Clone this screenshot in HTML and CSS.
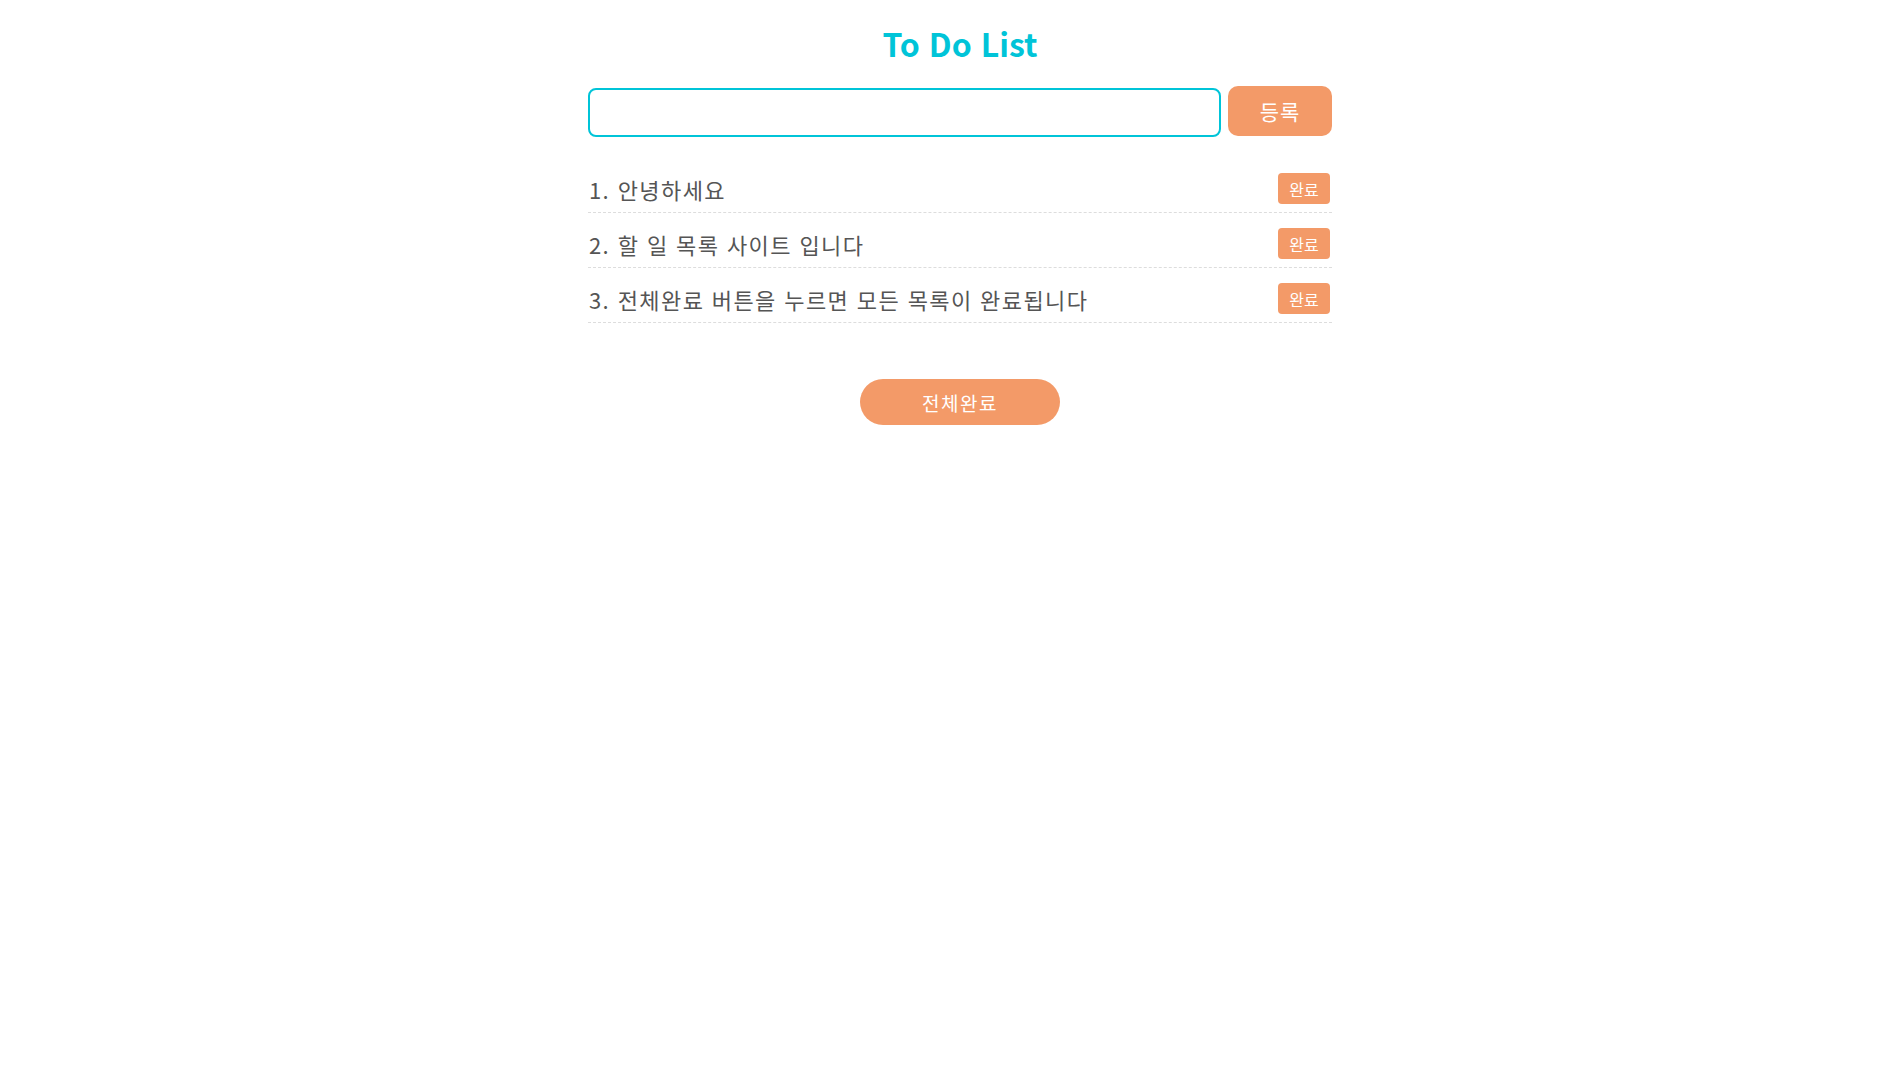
FILE: index.html
```html
<!DOCTYPE html>
<html lang="ko">
<head>
<meta charset="utf-8">
<title>To Do List</title>
<link rel="stylesheet" href="styles.css">
</head>
<body>
<div class="app">
  <h1 class="title">To Do List</h1>
  <form class="add-form">
    <input class="add-input" type="text">
    <button class="add-btn" type="button">등록</button>
  </form>
  <ul class="todo-list">
    <li class="todo-item"><span class="todo-text">1. 안녕하세요</span><button class="done-btn" type="button">완료</button></li>
    <li class="todo-item"><span class="todo-text">2. 할 일 목록 사이트 입니다</span><button class="done-btn" type="button">완료</button></li>
    <li class="todo-item"><span class="todo-text">3. 전체완료 버튼을 누르면 모든 목록이 완료됩니다</span><button class="done-btn" type="button">완료</button></li>
  </ul>
  <button class="all-btn" type="button">전체완료</button>
</div>
</body>
</html>
```
FILE: styles.css
```css
html, body {
  background: #ffffff;
}
body {
  margin: 0;
  padding: 0 0 0 20px;
  font-family: "Noto Sans CJK KR", "Noto Sans", sans-serif;
}
.app {
  width: 744px;
  margin: 0 auto;
  padding-top: 21px;
}
.title {
  margin: 0;
  font-size: 32px;
  line-height: 44px;
  font-weight: 700;
  color: #00c4d8;
  text-align: center;
}
.add-form {
  display: flex;
  align-items: flex-start;
  gap: 7px;
  margin: 21px 0 0;
}
.add-input {
  box-sizing: border-box;
  width: 633px;
  height: 49px;
  margin-top: 2px;
  border: 2px solid #00c4d8;
  border-radius: 8px;
  padding: 0 12px;
  font-family: inherit;
  font-size: 18px;
  outline: none;
}
.add-btn {
  width: 104px;
  height: 50px;
  border: 0;
  border-radius: 10px;
  background: #f39a68;
  color: #ffffff;
  font-family: inherit;
  font-size: 21px;
  letter-spacing: 1px;
  padding: 0;
}
.todo-list {
  list-style: none;
  margin: 21px 0 0;
  padding: 0;
}
.todo-item {
  box-sizing: border-box;
  height: 55px;
  padding: 7px 2px 0 1px;
  display: flex;
  align-items: center;
  justify-content: space-between;
  border-bottom: 1px dashed #dddddd;
}
.todo-text {
  font-size: 22px;
  letter-spacing: 1.4px;
  color: #555555;
}
.done-btn {
  width: 52px;
  height: 31px;
  border: 0;
  border-radius: 4px;
  background: #f39a68;
  color: #ffffff;
  font-family: inherit;
  font-size: 16px;
  padding: 0;
}
.all-btn {
  display: block;
  width: 200px;
  height: 46px;
  margin: 56px auto 0;
  border: 0;
  border-radius: 23px;
  background: #f39a68;
  color: #ffffff;
  font-family: inherit;
  font-size: 19px;
  letter-spacing: 1.5px;
  padding: 0;
}
```
